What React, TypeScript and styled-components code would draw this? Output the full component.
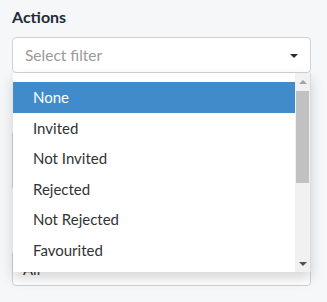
import React from "react";
import styled, { createGlobalStyle } from "styled-components";

const Global = createGlobalStyle`
  html, body { margin: 0; padding: 0; background: #f6f7f9; }
  body { font-family: Lato, "Open Sans", sans-serif; overflow: hidden; }
  * { box-sizing: border-box; }
`;

const Page = styled.div`
  width: 327px;
  height: 302px;
  padding: 7px 16px 0 12px;
  display: flex;
  flex-direction: column;
`;

const Label = styled.div`
  font-size: 16px;
  line-height: 20px;
  font-weight: 700;
  color: #1f2b3a;
`;

const SelectWrap = styled.div<{ $mt: number; $top?: boolean }>`
  position: relative;
  margin-top: ${(p) => p.$mt}px;
  z-index: ${(p) => (p.$top ? 2 : 1)};
`;

const SelectBox = styled.div<{ $h?: number; $pt?: number }>`
  height: ${(p) => p.$h ?? 36}px;
  background: #fff;
  border: 1px solid #cfd2d6;
  border-radius: 4px;
  display: flex;
  align-items: ${(p) => (p.$pt !== undefined ? "flex-start" : "center")};
  padding: ${(p) => p.$pt ?? 0}px 12px 0 12px;
  font-size: 15.5px;
  line-height: 18px;
  color: #9a9a9a;
`;

const Value = styled.span`
  color: #333;
  font-size: 15px;
  margin-left: -2px;
`;

const Caret = styled.span`
  margin-left: auto;
  width: 0;
  height: 0;
  border-left: 4px solid transparent;
  border-right: 4px solid transparent;
  border-top: 4px solid #2b2b2b;
  margin-top: 1px;
`;

const Menu = styled.div`
  position: absolute;
  top: 36px;
  left: 1px;
  right: 0;
  height: 199px;
  background: #fff;
  display: flex;
  overflow: hidden;
  box-shadow: 0 6px 12px rgba(0, 0, 0, 0.17);
  border-right: 1px solid #dcdcdc;
`;

const List = styled.ul`
  flex: 1;
  list-style: none;
  margin: 0;
  padding: 9px 0 0 0;
  overflow: hidden;
`;

const Item = styled.li<{ $active?: boolean }>`
  height: 30.5px;
  display: flex;
  align-items: center;
  padding-left: 20px;
  font-size: 15px;
  color: ${(p) => (p.$active ? "#fff" : "#333")};
  background: ${(p) => (p.$active ? "#428bca" : "transparent")};
`;

const Scrollbar = styled.div`
  width: 15px;
  background: #f1f1f1;
  display: flex;
  flex-direction: column;
  align-items: center;
`;

const Arrow = styled.div<{ $up?: boolean }>`
  height: 17px;
  display: flex;
  align-items: center;
  justify-content: center;
  &::after {
    content: "";
    width: 0;
    height: 0;
    border-left: 4px solid transparent;
    border-right: 4px solid transparent;
    ${(p) =>
      p.$up
        ? "border-bottom: 4px solid #a3a3a3;"
        : "border-top: 4px solid #505050;"}
  }
`;

const Track = styled.div`
  flex: 1;
  width: 100%;
  display: flex;
  justify-content: center;
`;

const Thumb = styled.div`
  width: 13px;
  height: 92px;
  background: #c1c1c1;
  margin-top: 1px;
`;

const options = [
  "None",
  "Invited",
  "Not Invited",
  "Rejected",
  "Not Rejected",
  "Favourited",
];

export default function App() {
  return (
    <>
      <Global />
      <Page>
        <Label>Actions</Label>
        <SelectWrap $mt={10} $top>
          <SelectBox>
            Select filter
            <Caret />
          </SelectBox>
          <Menu>
            <List>
              {options.map((o, i) => (
                <Item key={o} $active={i === 0}>
                  {o}
                </Item>
              ))}
            </List>
            <Scrollbar>
              <Arrow $up />
              <Track>
                <Thumb />
              </Track>
              <Arrow />
            </Scrollbar>
          </Menu>
        </SelectWrap>
        <SelectWrap $mt={57}>
          <SelectBox $h={61} />
        </SelectWrap>
        <SelectWrap $mt={59}>
          <SelectBox $pt={9}>
            <Value>All</Value>
          </SelectBox>
        </SelectWrap>
      </Page>
    </>
  );
}
